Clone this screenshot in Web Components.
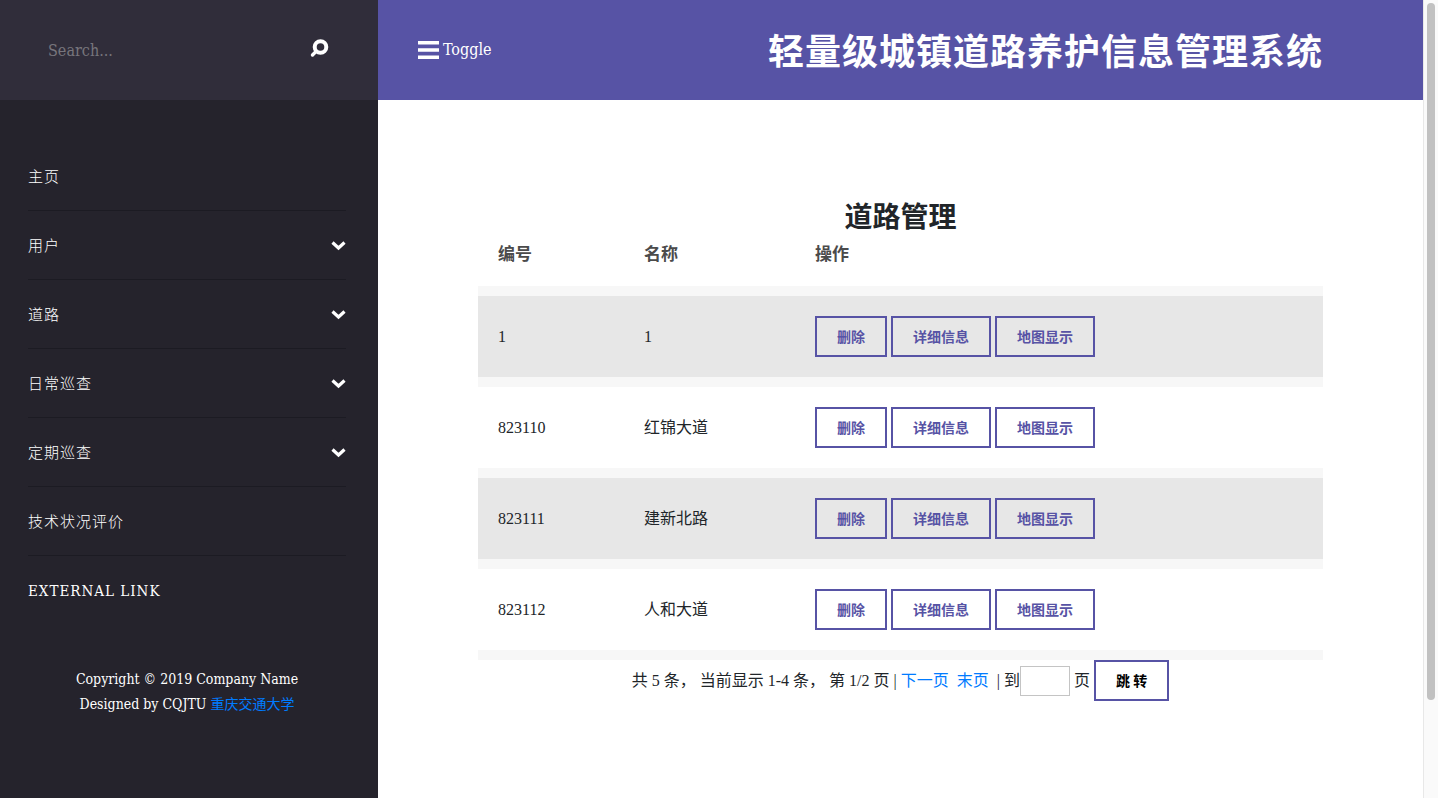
<!DOCTYPE html>
<html lang="zh-CN">
<head>
<meta charset="utf-8">
<title>轻量级城镇道路养护信息管理系统</title>
<style>
  :root {
    --accent: #5753a5;
    --link: #007bff;
    --ink: #212529;
    --data-font: "Roboto Slab", "Liberation Serif", "Noto Sans CJK SC", serif;
  }
  html, body { height: 100%; }
  body {
    margin: 0;
    background: #fff;
    color: var(--ink);
    font: 400 16px/24px "Roboto Slab", "DejaVu Serif Condensed", "Noto Sans CJK SC", serif;
  }
</style>
</head>
<body>
<road-app></road-app>
<script>
const define = (name, html) => customElements.define(name, class extends HTMLElement {
  constructor() {
    super();
    const template = document.createElement('template');
    template.innerHTML = html;
    this.attachShadow({ mode: 'open' }).append(template.content.cloneNode(true));
  }
});

define('search-box', `
  <style>
    :host { display: block; background: #302d3a; }
    form { display: flex; align-items: center; height: 100px; padding: 2px 49px 0 48px; box-sizing: border-box; }
    input { flex: 1; min-width: 0; padding: 0; border: 0; outline: 0; background: none; color: #fff; font: inherit; }
    input::placeholder { color: #77757c; opacity: 1; }
    button { display: flex; padding: 0 0 4px; border: 0; background: none; }
  </style>
  <form>
    <input type="text" placeholder="Search..." aria-label="Search">
    <button type="button" aria-label="Search">
      <svg width="20" height="20" viewBox="0 0 20 20" fill="none" stroke="#fff">
        <circle cx="11.500" cy="8" r="5.800" stroke-width="4"/>
        <path d="M6.500 13 3.500 16" stroke-width="3.400" stroke-linecap="round"/>
      </svg>
    </button>
  </form>`);

define('nav-item', `
  <style>
    :host { display: block; border-bottom: 1px solid #1c1b23; }
    :host([last]) { border-bottom: 0; font-weight: 500; }
    a { display: flex; align-items: center; justify-content: space-between; padding: 23px 0 21px;
        color: #fff; font-size: 15px; letter-spacing: 1px; text-decoration: none; }
    svg { display: none; }
    :host([sub]) svg { display: block; }
  </style>
  <a href="#"><slot></slot>
    <svg width="15" height="10" viewBox="0 0 15 10" fill="none" stroke="#fff" stroke-width="3.200"><path d="M1.500 1.500 7.500 7 13.500 1.500"/></svg>
  </a>`);

define('side-bar', `
  <style>
    :host { display: block; background: #25232c; color: #fff; }
    nav { padding: 42px 32px 0 28px; font-weight: 300; }
    footer { margin: 0 32px 0 28px; padding: 43px 0 80px; text-align: center; font-size: 14px; line-height: 25px; font-weight: 500; }
    p { margin: 0; }
    footer a { color: var(--link); text-decoration: none; font-weight: 400; }
  </style>
  <search-box></search-box>
  <nav>
    <nav-item>主页</nav-item>
    <nav-item sub>用户</nav-item>
    <nav-item sub>道路</nav-item>
    <nav-item sub>日常巡查</nav-item>
    <nav-item sub>定期巡查</nav-item>
    <nav-item>技术状况评价</nav-item>
    <nav-item last>EXTERNAL LINK</nav-item>
  </nav>
  <footer>
    <p>Copyright © 2019 Company Name</p>
    <p>Designed by CQJTU <a href="#">重庆交通大学</a></p>
  </footer>`);

define('top-bar', `
  <style>
    :host { display: flex; align-items: center; justify-content: space-between; height: 100px;
            padding: 0 100px 0 40px; background: var(--accent); color: #fff; }
    button { display: flex; align-items: center; gap: 4px; padding: 0; border: 0; background: none; color: inherit; font: inherit; font-weight: 500; }
    h1 { margin: 0; padding-bottom: 2px; font: 700 36px/48px "Noto Sans CJK SC", sans-serif; letter-spacing: 1px; white-space: nowrap; }
  </style>
  <button type="button">
    <svg width="21" height="18" viewBox="0 0 21 18" fill="#fff"><path d="M0 0h21v3.500H0zM0 7.200h21v3.500H0zM0 14.400h21v3.500H0z"/></svg>
    Toggle
  </button>
  <h1><slot></slot></h1>`);

define('outline-button', `
  <style>
    :host { display: block; color: var(--accent); white-space: normal; }
    button { display: block; height: 41px; padding: 0 20px 2px; border: 2px solid var(--accent); background: none;
             color: inherit; font: 700 14px/20px "Noto Sans CJK SC", sans-serif; white-space: nowrap; }
  </style>
  <button type="button"><slot></slot></button>`);

customElements.define('road-table', class extends HTMLElement {
  connectedCallback() {
    const roads = [['1', '1'], ['823110', '红锦大道'], ['823111', '建新北路'], ['823112', '人和大道']];
    const rows = roads.map(([id, name]) => `
      <tr><td>${id}</td><td>${name}</td><td><div>
        <outline-button>删除</outline-button>
        <outline-button>详细信息</outline-button>
        <outline-button>地图显示</outline-button>
      </div></td></tr>`).join('');
    this.attachShadow({ mode: 'open' }).innerHTML = `
      <style>
        :host { display: block; font-family: var(--data-font); }
        table { width: 100%; border-collapse: separate; border-spacing: 0; table-layout: fixed; }
        th, td { padding: 20px; text-align: left; border-bottom: 10px solid #f7f7f7; }
        th { padding: 7px 20px 21px; color: #4b4b4b; font: 600 17px/24px "Noto Sans CJK SC", sans-serif; }
        th:nth-child(1) { width: 106px; }
        th:nth-child(2) { width: 131px; }
        tbody tr:nth-child(odd) td { background: #e7e7e7; background-clip: padding-box; }
        div { display: flex; gap: 4px; }
      </style>
      <table>
        <thead><tr><th>编号</th><th>名称</th><th>操作</th></tr></thead>
        <tbody>${rows}</tbody>
      </table>`;
  }
});

define('page-nav', `
  <style>
    :host { display: flex; justify-content: center; align-items: center; gap: 4px; white-space: pre; font-family: var(--data-font); }
    a { color: var(--link); text-decoration: none; }
    label { display: flex; align-items: center; }
    input { width: 50px; height: 30px; padding: 0 4px; box-sizing: border-box; border: 1px solid #c4c4c4; background: #fff; font: inherit; }
    outline-button { color: #000; }
    a + a { margin: 0 4px; }
  </style><span>共 5 条， 当前显示 1-4 条， 第 1/2 页 |</span><a href="#">下一页</a><a href="#">末页</a><label>| 到<input type="text" aria-label="页码"></label><span>页</span><outline-button>跳 转</outline-button>`);

define('page-scrollbar', `
  <style>
    :host { display: block; width: 15px; height: 100vh; padding: 3px; box-sizing: border-box; border-left: 1px solid #e8e8e8; background: #fafafa; }
    div { width: 8px; height: 88%; border-radius: 4px; background: #c1c1c1; }
  </style>
  <div></div>`);

define('road-app', `
  <style>
    :host { display: grid; grid-template-columns: 378px minmax(0, 1fr) 15px; min-height: 100vh; }
    section { padding: 100px 100px 40px; }
    h2 { margin: 0 0 4px; text-align: center; font: 600 28px/30px "Noto Sans CJK SC", sans-serif; }
  </style>
  <side-bar></side-bar>
  <main>
    <top-bar>轻量级城镇道路养护信息管理系统</top-bar>
    <section>
      <h2>道路管理</h2>
      <road-table></road-table>
      <page-nav></page-nav>
    </section>
  </main>
  <page-scrollbar></page-scrollbar>`);
</script>
</body>
</html>
